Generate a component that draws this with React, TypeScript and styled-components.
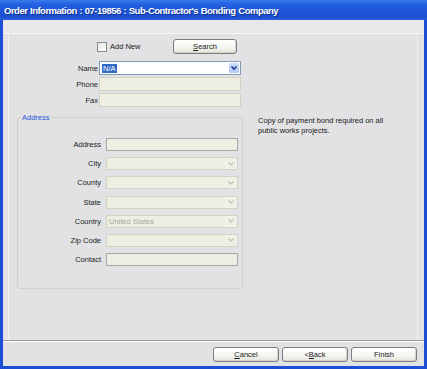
import React from "react";
import styled, { createGlobalStyle } from "styled-components";

const Global = createGlobalStyle`
  html, body { margin: 0; padding: 0; background: #ffffff; }
  body { font-family: "Liberation Sans", Arial, sans-serif; }
  * { box-sizing: border-box; }
`;

const Window = styled.div`
  width: 427px;
  height: 369px;
  display: flex;
  flex-direction: column;
  background: #1d4fd6;
`;

const TitleBar = styled.div`
  height: 20px;
  flex: none;
  display: flex;
  align-items: center;
  padding-left: 4px;
  background: linear-gradient(#3a7cf0 0%, #2362e0 20%, #1c53d6 60%, #1a4fd0 85%, #2a5fdc 100%);
  color: #ffffff;
  font-family: "Liberation Sans", Arial, sans-serif;
  font-weight: bold;
  font-size: 9.5px;
  letter-spacing: -0.5px;
  word-spacing: 0.5px;
  text-shadow: 1px 1px 0 #0e2f8f;
  white-space: nowrap;
`;

const Client = styled.div`
  flex: 1;
  margin: 0 3px 3px 3px;
  display: flex;
  flex-direction: column;
  background: #e2e2e5;
  font-size: 7.5px;
  color: #1a1a1a;
`;

const TopBand = styled.div`
  height: 14px;
  flex: none;
  background: #e8e8ea;
  border-bottom: 1px solid #f7f7f7;
`;

const Panel = styled.div`
  flex: 1;
  margin: 0 6px 0 5px;
  border-left: 1px solid #f2f2f3;
  border-right: 1px solid #f2f2f3;
  display: flex;
  flex-direction: column;
  padding-top: 5px;
`;

const Separator = styled.div`
  flex: none;
  border-top: 1px solid #9c9ca0;
  border-bottom: 1px solid #ffffff;
`;

const ButtonRow = styled.div`
  height: 24px;
  flex: none;
  display: flex;
  justify-content: flex-end;
  align-items: flex-start;
  gap: 3px;
  padding: 5px 7px 0 0;
`;

const Button = styled.div<{ $w: number }>`
  width: ${(p) => p.$w}px;
  height: 15px;
  border: 1px solid #7d7d7d;
  border-radius: 3px;
  background: linear-gradient(#ffffff 0%, #f4f4f0 60%, #e4e2da 100%);
  display: flex;
  align-items: center;
  justify-content: center;
  font-size: 7.5px;
  color: #1a1a1a;
  box-shadow: inset -1px -1px 0 #d6d3c8;
`;

const Key = styled.span`
  text-decoration: underline;
`;

const TopRow = styled.div`
  display: flex;
  align-items: center;
  height: 15px;
  margin-left: 88px;
  width: 140px;
  margin-bottom: 7px;
`;

const CheckLabel = styled.div`
  display: flex;
  align-items: center;
  gap: 3px;
`;

const CheckBox = styled.div`
  width: 10px;
  height: 10px;
  border: 1px solid #8a8a8a;
  background: linear-gradient(135deg, #e6e6e0, #ffffff);
`;

const TopGrid = styled.div`
  display: grid;
  grid-template-columns: 51px 142px;
  grid-auto-rows: 14px;
  column-gap: 1px;
  row-gap: 2px;
  margin-left: 38px;
`;

const Label = styled.div`
  display: flex;
  align-items: center;
  justify-content: flex-end;
  white-space: nowrap;
`;

const Field = styled.div<{ $white?: boolean; $dark?: boolean }>`
  position: relative;
  display: flex;
  align-items: center;
  padding-left: 2px;
  background: ${(p) => (p.$white ? "#ffffff" : "#eeeee2")};
  border: 1px solid ${(p) => (p.$white ? "#7f9db9" : p.$dark ? "#a7a9a6" : "#d3d3c4")};
  color: #a8a8a0;
  white-space: nowrap;
`;

const Selected = styled.span`
  background: #316ac5;
  color: #ffffff;
  padding: 0 1px;
`;

const DropButton = styled.div<{ $active?: boolean }>`
  position: absolute;
  right: 0;
  top: 0;
  bottom: 0;
  width: 12px;
  display: flex;
  align-items: center;
  justify-content: center;
  border-radius: 2px;
  background: ${(p) => (p.$active ? "linear-gradient(#cddcfd, #b4c8f6)" : "#efefe6")};
  border: 1px solid ${(p) => (p.$active ? "#ffffff" : "#f3f3ec")};
`;

const BottomSection = styled.div`
  display: flex;
  align-items: flex-start;
  margin-top: 6px;
`;

const Group = styled.fieldset`
  margin: 0 0 0 8px;
  width: 226px;
  height: 176px;
  padding: 0 4px 0 0;
  border: 1px solid #d2d2c6;
  border-radius: 3px;
  min-width: 0;
`;

const Legend = styled.legend`
  color: #1f58d6;
  padding: 0 1px;
  margin-left: 3px;
  font-size: 7.5px;
  line-height: 9px;
`;

const GroupGrid = styled.div`
  display: grid;
  grid-template-columns: 83px 132px;
  grid-auto-rows: 13px;
  column-gap: 5px;
  row-gap: 6.2px;
  margin-top: 16px;
`;

const Note = styled.div`
  margin: 3px 0 0 15px;
  width: 150px;
  line-height: 10px;
  color: #202020;
`;

const Chevron: React.FC<{ active?: boolean }> = ({ active }) => (
  <svg width="8" height="6" viewBox="0 0 8 6">
    <path
      d="M1.5 1.5 L4 4 L6.5 1.5"
      fill="none"
      stroke={active ? "#1d3a8a" : "#c4c4bc"}
      strokeWidth={active ? 1.6 : 1.3}
    />
  </svg>
);

type Row = { label: string; combo?: boolean; value?: string };

const addressRows: Row[] = [
  { label: "Address" },
  { label: "City", combo: true },
  { label: "County", combo: true },
  { label: "State", combo: true },
  { label: "Country", combo: true, value: "United States" },
  { label: "Zip Code", combo: true },
  { label: "Contact" },
];

export default function App() {
  return (
    <>
      <Global />
      <Window>
        <TitleBar>Order Information : 07-19856 : Sub-Contractor's Bonding Company</TitleBar>
        <Client>
          <TopBand />
          <Panel>
            <TopRow>
              <CheckLabel>
                <CheckBox />
                <span>Add New</span>
              </CheckLabel>
              <Button $w={64} style={{ marginLeft: "auto" }}>
                <span>
                  <Key>S</Key>earch
                </span>
              </Button>
            </TopRow>
            <TopGrid>
              <Label>Name</Label>
              <Field $white>
                <Selected>N/A</Selected>
                <DropButton $active>
                  <Chevron active />
                </DropButton>
              </Field>
              <Label>Phone</Label>
              <Field />
              <Label>Fax</Label>
              <Field />
            </TopGrid>
            <BottomSection>
              <Group>
                <Legend>Address</Legend>
                <GroupGrid>
                  {addressRows.map((r) => (
                    <React.Fragment key={r.label}>
                      <Label>{r.label}</Label>
                      <Field $dark={!r.combo}>
                        {r.value}
                        {r.combo && (
                          <DropButton>
                            <Chevron />
                          </DropButton>
                        )}
                      </Field>
                    </React.Fragment>
                  ))}
                </GroupGrid>
              </Group>
              <Note>
                Copy of payment bond required on all
                <br />
                public works projects.
              </Note>
            </BottomSection>
          </Panel>
          <Separator />
          <ButtonRow>
            <Button $w={66}>
              <span>
                <Key>C</Key>ancel
              </span>
            </Button>
            <Button $w={66}>
              <span>
                &lt;<Key>B</Key>ack
              </span>
            </Button>
            <Button $w={66}>Finish</Button>
          </ButtonRow>
        </Client>
      </Window>
    </>
  );
}
